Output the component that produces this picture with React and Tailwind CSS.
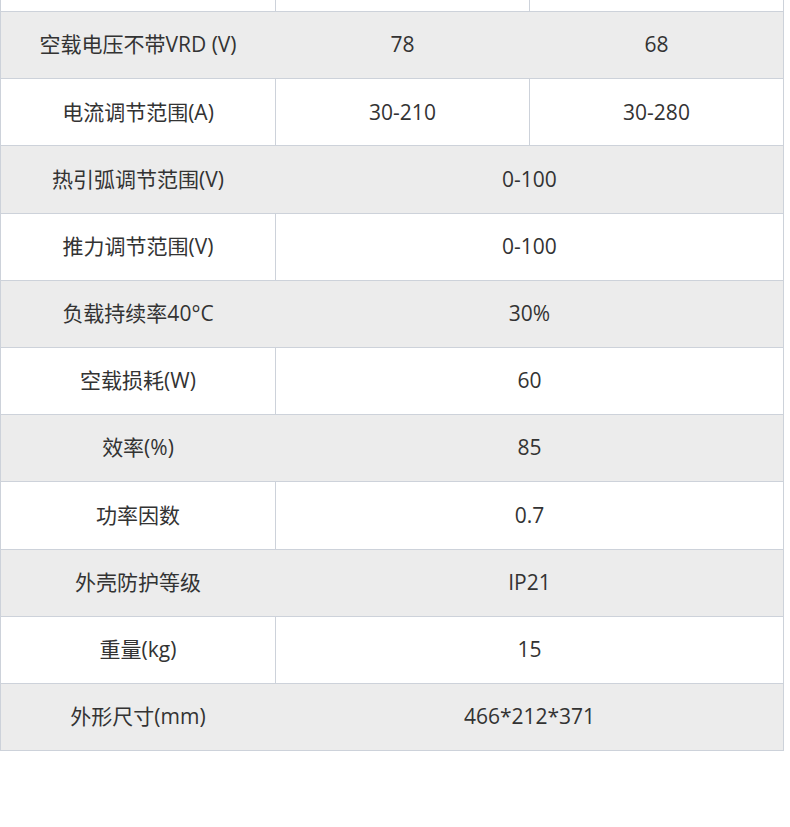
import React from 'react';

// spec rows: [label, a, b] — b omitted means value spans both columns
const rows = [
  ['空载电压不带VRD (V)', '78', '68'],
  ['电流调节范围(A)', '30-210', '30-280'],
  ['热引弧调节范围(V)', '0-100'],
  ['推力调节范围(V)', '0-100'],
  ['负载持续率40°C', '30%'],
  ['空载损耗(W)', '60'],
  ['效率(%)', '85'],
  ['功率因数', '0.7'],
  ['外壳防护等级', 'IP21'],
  ['重量(kg)', '15'],
  ['外形尺寸(mm)', '466*212*371'],
];

const Row = ({ label, a, b, gray }) => {
  const bg = gray ? 'bg-[#ececec]' : 'bg-white';
  const divider = gray ? 'border-[#ececec]' : 'border-[#cdd2da]';
  return (
    <div className={`flex h-[67.2px] border-b border-[#cdd2da] ${bg}`}>
      <div className={`w-[275px] shrink-0 flex items-center justify-center border-r ${divider}`}>
        {label}
      </div>
      {b === undefined ? (
        <div className="flex-1 flex items-center justify-center">{a}</div>
      ) : (
        <>
          <div className={`w-[254px] shrink-0 flex items-center justify-center border-r ${divider}`}>{a}</div>
          <div className="flex-1 flex items-center justify-center">{b}</div>
        </>
      )}
    </div>
  );
};

export default function App() {
  return (
    <div className="w-[790px] h-[827px] bg-white overflow-hidden">
      <div
        className="w-[784px] border-x border-[#cdd2da] text-[21px] text-[#333]"
        style={{ fontFamily: '"Open Sans", "Noto Sans CJK SC", sans-serif' }}
      >
        {/* tail end of the previous row, cut off at the top */}
        <div className="flex h-[12px] border-b border-[#cdd2da] bg-white">
          <div className="w-[275px] shrink-0 border-r border-[#cdd2da]" />
          <div className="w-[254px] shrink-0 border-r border-[#cdd2da]" />
          <div className="flex-1" />
        </div>
        {rows.map(([label, a, b], i) => (
          <Row key={label} label={label} a={a} b={b} gray={i % 2 === 0} />
        ))}
      </div>
    </div>
  );
}
